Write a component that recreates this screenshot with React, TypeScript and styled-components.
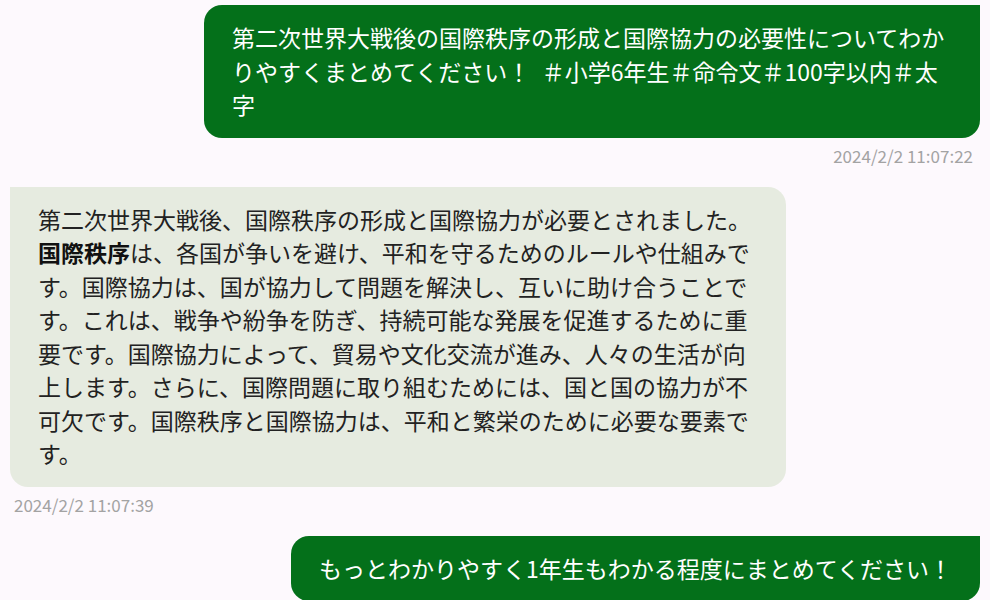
import styled, { createGlobalStyle } from "styled-components";

const GlobalStyle = createGlobalStyle`
  html, body {
    margin: 0;
    padding: 0;
    background: #fdf9fd;
  }
  body {
    font-family: "Noto Sans CJK JP", "Noto Sans", sans-serif;
  }
`;

const Thread = styled.div`
  display: flex;
  flex-direction: column;
  gap: 21px;
  padding: 5px 10px 0 10px;
  height: 600px;
  overflow: hidden;
  box-sizing: border-box;
`;

const Message = styled.div<{ $mine: boolean }>`
  display: flex;
  flex-direction: column;
  align-items: ${(p) => (p.$mine ? "flex-end" : "flex-start")};
  gap: 8px;
`;

const Bubble = styled.div<{ $mine: boolean }>`
  max-width: 80%;
  box-sizing: border-box;
  padding: 16px 28px;
  font-size: 23px;
  line-height: 33.5px;
  border-radius: ${(p) => (p.$mine ? "18px 0 18px 18px" : "0 18px 18px 18px")};
  background: ${(p) => (p.$mine ? "#04701a" : "#e6ebe0")};
  color: ${(p) => (p.$mine ? "#ffffff" : "#222222")};
  white-space: pre-wrap;
  word-break: break-all;

  & b {
    font-weight: 700;
    color: #111;
  }
`;

const Time = styled.div<{ $mine: boolean }>`
  font-size: 17px;
  line-height: 20px;
  color: #a3a3a3;
  padding: ${(p) => (p.$mine ? "0 7px 0 0" : "0 0 0 4px")};
`;

const App = () => (
  <>
    <GlobalStyle />
    <Thread>
      <Message $mine>
        <Bubble $mine>
          {"第二次世界大戦後の国際秩序の形成と国際協力の必要性についてわかりやすくまとめてください！\u2002＃小学6年生＃命令文＃100字以内＃太字"}
        </Bubble>
        <Time $mine>2024/2/2 11:07:22</Time>
      </Message>
      <Message $mine={false}>
        <Bubble $mine={false}>
          第二次世界大戦後、国際秩序の形成と国際協力が必要とされました。
          <b>国際秩序</b>
          は、各国が争いを避け、平和を守るためのルールや仕組みです。国際協力は、国が協力して問題を解決し、互いに助け合うことです。これは、戦争や紛争を防ぎ、持続可能な発展を促進するために重要です。国際協力によって、貿易や文化交流が進み、人々の生活が向上します。さらに、国際問題に取り組むためには、国と国の協力が不可欠です。国際秩序と国際協力は、平和と繁栄のために必要な要素です。
        </Bubble>
        <Time $mine={false}>2024/2/2 11:07:39</Time>
      </Message>
      <Message $mine>
        <Bubble $mine>もっとわかりやすく1年生もわかる程度にまとめてください！</Bubble>
      </Message>
    </Thread>
  </>
);

export default App;
